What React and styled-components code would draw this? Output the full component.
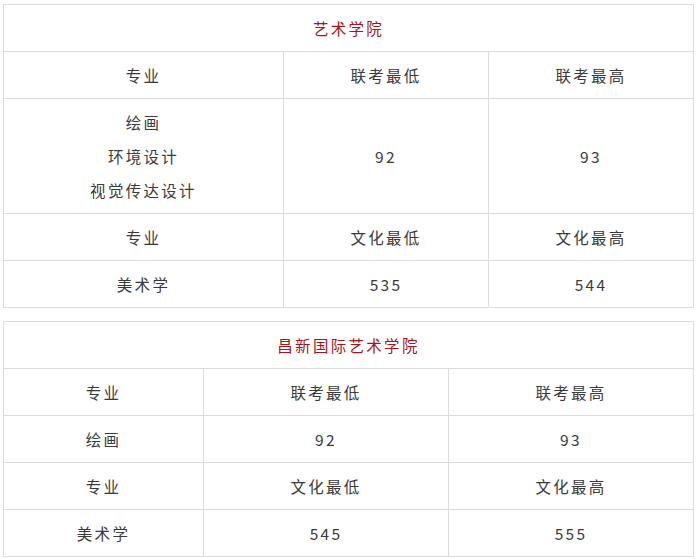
import React from "react";
import styled, { createGlobalStyle } from "styled-components";

const Global = createGlobalStyle`
  html, body { margin: 0; padding: 0; background: #fff; }
  body { font-family: "Noto Sans CJK SC", "Noto Sans", sans-serif; }
`;

const Page = styled.div`
  padding: 4px 0 0 3px;
  display: flex;
  flex-direction: column;
  gap: 13px;
`;

const Table = styled.table`
  width: 691px;
  border-collapse: collapse;
  table-layout: fixed;
  border: 1px solid #dcdcdc;
`;

const Cell = styled.td`
  border: 1px solid #dcdcdc;
  padding: 6px 4px;
  line-height: 34px;
  text-align: center;
  vertical-align: middle;
  font-size: 15.5px;
  letter-spacing: 2.3px;
  color: ${(p) => (p.$title ? "#a8141a" : "#3a3a3a")};
`;

const Line = styled.div`
  line-height: 34px;
`;

function ScoreTable({ title, widths, rows }) {
  return (
    <Table>
      <colgroup>
        {widths.map((w, i) => (
          <col key={i} style={{ width: w }} />
        ))}
      </colgroup>
      <tbody>
        <tr>
          <Cell colSpan={3} $title>
            {title}
          </Cell>
        </tr>
        {rows.map((r, i) => (
          <tr key={i}>
            {r.map((c, j) => (
              <Cell key={j}>
                {Array.isArray(c) ? c.map((l) => <Line key={l}>{l}</Line>) : c}
              </Cell>
            ))}
          </tr>
        ))}
      </tbody>
    </Table>
  );
}

export default function App() {
  return (
    <>
      <Global />
      <Page>
        <ScoreTable
          title="艺术学院"
          widths={[280, 205, 205]}
          rows={[
            ["专业", "联考最低", "联考最高"],
            [["绘画", "环境设计", "视觉传达设计"], "92", "93"],
            ["专业", "文化最低", "文化最高"],
            ["美术学", "535", "544"],
          ]}
        />
        <ScoreTable
          title="昌新国际艺术学院"
          widths={[200, 245, 245]}
          rows={[
            ["专业", "联考最低", "联考最高"],
            ["绘画", "92", "93"],
            ["专业", "文化最低", "文化最高"],
            ["美术学", "545", "555"],
          ]}
        />
      </Page>
    </>
  );
}
